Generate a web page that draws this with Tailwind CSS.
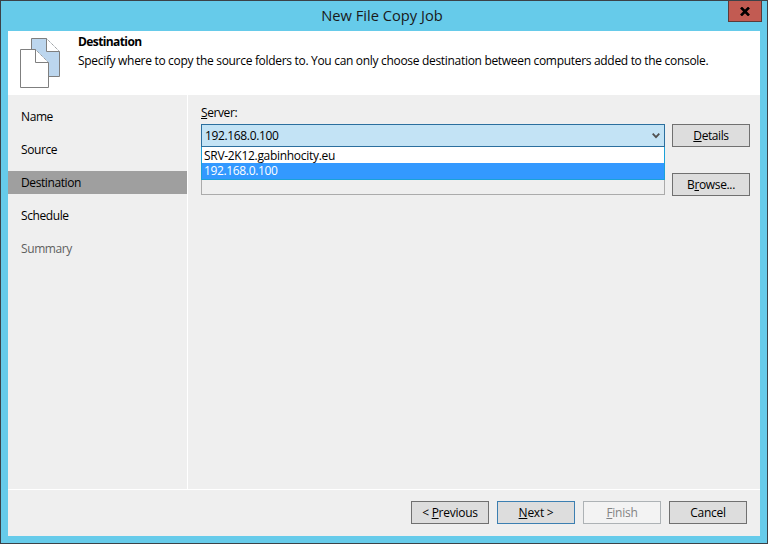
<!DOCTYPE html>
<html lang="en">
<head>
    <meta charset="UTF-8">
    <title>New File Copy Job</title>
    <script src="https://cdn.jsdelivr.net/npm/@tailwindcss/browser@4"></script>
</head>
<body class="w-[768px] h-[544px] overflow-hidden font-['Open_Sans','Noto_Sans',sans-serif] text-[12px] leading-4 text-black">
    <!-- Window -->
    <div class="w-[768px] h-[544px] flex flex-col bg-[#66cbea] border border-[#3b4248] px-[7px] pb-[7px]">
        <!-- Title bar -->
        <div class="h-[30px] shrink-0 relative flex items-center justify-center pr-[4px] pb-[2px] text-[14.7px] text-[#1a1a1a]">
            New File Copy Job
            <div class="absolute right-[-2px] top-0 w-[34px] h-[21px] bg-[#c25b52] border border-[#5b3a38] border-t-0 flex items-center justify-center">
                <svg width="10" height="9" viewBox="0 0 10 9"><path d="M1 0.5 L9 8.5 M9 0.5 L1 8.5" stroke="#000" stroke-width="2.6" fill="none"/></svg>
            </div>
        </div>

        <!-- Header -->
        <div class="h-[64px] shrink-0 bg-white flex">
            <div class="w-[70px] shrink-0 pl-[12px] pt-[7px]">
                <svg width="42" height="50" viewBox="0 0 42 50">
                    <path d="M11.5 0.5 H26.5 L39.5 13.5 V38.5 H11.5 Z" fill="#bcd6ee"/>
                    <path d="M11.5 11.5 V0.5 H26.5 M39.5 13.5 V38.5 H28.5" fill="none" stroke="#7f7f7f"/>
                    <path d="M26.5 0.5 V13.5 H39.5 Z" fill="#fff"/>
                    <path d="M26.5 0.5 V13.5 H39.5" fill="none" stroke="#7f7f7f"/>
                    <path d="M26.5 0.5 L39.5 13.5" fill="none" stroke="#7f7f7f" stroke-dasharray="1 1"/>
                    <path d="M0.5 49.5 V11.5 H15.5 L28.5 24.5 V49.5 Z" fill="#fff"/>
                    <path d="M15.5 11.5 H0.5 V49.5 H28.5 V24.5" fill="none" stroke="#7f7f7f"/>
                    <path d="M15.5 11.5 V24.5 H28.5" fill="none" stroke="#7f7f7f"/>
                    <path d="M15.5 11.5 L28.5 24.5" fill="none" stroke="#7f7f7f" stroke-dasharray="1 1"/>
                </svg>
            </div>
            <div class="pt-[3px]">
                <div class="font-bold leading-[16px] tracking-[-0.6px]">Destination</div>
                <div class="leading-[19px] mt-[1px] tracking-[-0.31px]">Specify where to copy the source folders to. You can only choose destination between computers added to the console.</div>
            </div>
        </div>

        <!-- Body -->
        <div class="flex-1 flex bg-[#efefef] min-h-0">
            <!-- Steps -->
            <div class="w-[179px] shrink-0 pt-[10px] flex flex-col gap-[10px] tracking-[-0.4px]">
                <div class="h-[23px] pl-[13px] flex items-center">Name</div>
                <div class="h-[23px] pl-[13px] flex items-center">Source</div>
                <div class="h-[23px] pl-[13px] flex items-center bg-[#9f9f9f]">Destination</div>
                <div class="h-[23px] pl-[13px] flex items-center">Schedule</div>
                <div class="h-[23px] pl-[13px] flex items-center text-[#5f5f5f]">Summary</div>
            </div>
            <div class="w-px shrink-0 bg-white"></div>

            <!-- Form -->
            <div class="flex-1 pl-[13px] pr-[10px] pt-[10px] flex gap-[7px]">
                <div class="w-[464px] shrink-0">
                    <div class="h-[19px] leading-4 tracking-[-0.4px]"><span class="underline">S</span>erver:</div>
                    <div class="relative h-[23px] bg-[#c3e3f5] border border-[#2b6f9e] pl-[3px] pr-[4px] flex items-center justify-between">
                        <span class="tracking-[-0.35px]">192.168.0.100</span>
                        <svg width="8" height="6" viewBox="0 0 8 6"><path d="M0.7 0.7 L4 4.2 L7.3 0.7" stroke="#505050" stroke-width="1.8" fill="none"/></svg>
                    </div>
                    <div class="relative h-[48px] bg-[#efefef] border border-[#ababab] border-t-0">
                        <div class="absolute left-[-1px] right-[-1px] top-0 h-[33px] bg-white border border-[#1ba1d8] border-t-0 pt-px">
                            <div class="h-[15px] pl-[2px] leading-[15px] tracking-[-0.3px]">SRV-2K12.gabinhocity.eu</div>
                            <div class="h-[16px] pl-[2px] leading-[15px] bg-[#3399ff] text-white tracking-[-0.35px]">192.168.0.100</div>
                        </div>
                    </div>
                </div>
                <div class="w-[78px] shrink-0 pt-[19px] flex flex-col gap-[26px]">
                    <div class="h-[23px] bg-[#dddddd] border border-[#707070] flex items-center justify-center tracking-[-0.4px]"><span><span class="underline">D</span>etails</span></div>
                    <div class="h-[23px] bg-[#dddddd] border border-[#707070] flex items-center justify-center tracking-[-0.35px]"><span>B<span class="underline">r</span>owse...</span></div>
                </div>
            </div>
        </div>

        <!-- Footer -->
        <div class="h-[47px] shrink-0 bg-[#efefef] border-t border-white pl-[403px] pt-[11px] flex gap-[8px] tracking-[-0.25px]">
            <div class="w-[78px] h-[23px] bg-[#dddddd] border border-[#707070] flex items-center justify-center"><span>&lt; <span class="underline">P</span>revious</span></div>
            <div class="w-[78px] h-[23px] bg-[#dddddd] border border-[#3c7fb1] flex items-center justify-center"><span><span class="underline">N</span>ext &gt;</span></div>
            <div class="w-[78px] h-[23px] bg-[#f3f3f3] border border-[#adb2b5] text-[#838383] flex items-center justify-center"><span><span class="underline">F</span>inish</span></div>
            <div class="w-[78px] h-[23px] bg-[#dddddd] border border-[#707070] flex items-center justify-center">Cancel</div>
        </div>
    </div>
</body>
</html>
